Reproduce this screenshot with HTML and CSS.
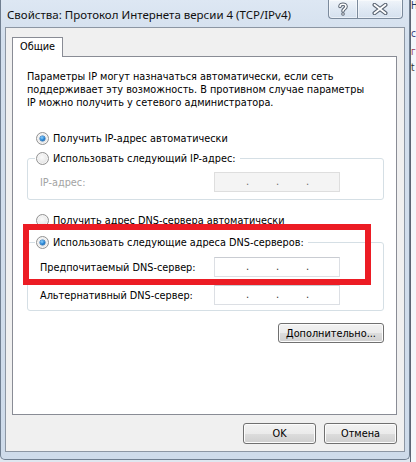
FILE: index.html
```html
<!DOCTYPE html>
<html lang="ru">
<head>
<meta charset="utf-8">
<title>Свойства: Протокол Интернета версии 4 (TCP/IPv4)</title>
<link rel="stylesheet" href="styles.css">
</head>
<body>
<div class="screen">
  <div class="window">
    <div class="titlebar">
      <span class="title">Свойства: Протокол Интернета версии 4 (TCP/IPv4)</span>
      <div class="caption">
        <div class="cbtn help">
          <svg width="12" height="14" viewBox="0 0 12 14">
            <path d="M3 4.5 C3 1.5 9 1.5 9 4.5 C9 6.8 6 6.8 6 9" fill="none" stroke="#5b6573" stroke-width="3.6" stroke-linecap="round"/>
            <circle cx="6" cy="12" r="1.8" fill="#5b6573"/>
            <path d="M3 4.5 C3 1.5 9 1.5 9 4.5 C9 6.8 6 6.8 6 9" fill="none" stroke="#fff" stroke-width="1.6" stroke-linecap="round"/>
            <circle cx="6" cy="12" r="0.8" fill="#fff"/>
          </svg>
        </div>
        <div class="cbtn close">
          <svg width="16" height="12" viewBox="0 0 16 12">
            <path d="M2.5 1.8 L13.5 10.2 M13.5 1.8 L2.5 10.2" stroke="#5b6573" stroke-width="4" stroke-linecap="round"/>
            <path d="M2.5 1.8 L13.5 10.2 M13.5 1.8 L2.5 10.2" stroke="#fff" stroke-width="1.8" stroke-linecap="round"/>
          </svg>
        </div>
      </div>
    </div>
    <div class="client">
      <div class="tabs"><div class="tab">Общие</div></div>
      <div class="panel">
        <p class="intro">Параметры IP могут назначаться автоматически, если сеть<br>поддерживает эту возможность. В противном случае параметры<br>IP можно получить у сетевого администратора.</p>
        <div class="opt first"><span class="radio checked"></span><span>Получить IP-адрес автоматически</span></div>
        <fieldset class="group g1">
          <legend><span class="legend-inner"><span class="radio"></span><span>Использовать следующий IP-адрес:</span></span></legend>
          <div class="field disabled">
            <span class="label">IP-адрес:</span>
            <div class="ipbox off"><span class="seg"></span><span class="dot">.</span><span class="seg"></span><span class="dot">.</span><span class="seg"></span><span class="dot">.</span><span class="seg"></span></div>
          </div>
        </fieldset>
        <div class="opt dnsauto"><span class="radio"></span><span>Получить адрес DNS-сервера автоматически</span></div>
        <fieldset class="group g2">
          <legend><span class="legend-inner"><span class="radio checked"></span><span>Использовать следующие адреса DNS-серверов:</span></span></legend>
          <div class="field f1">
            <span class="label">Предпочитаемый DNS-сервер:</span>
            <div class="ipbox"><span class="seg"></span><span class="dot">.</span><span class="seg"></span><span class="dot">.</span><span class="seg"></span><span class="dot">.</span><span class="seg"></span></div>
          </div>
          <div class="field f2">
            <span class="label">Альтернативный DNS-сервер:</span>
            <div class="ipbox"><span class="seg"></span><span class="dot">.</span><span class="seg"></span><span class="dot">.</span><span class="seg"></span><span class="dot">.</span><span class="seg"></span></div>
          </div>
        </fieldset>
        <div class="adv"><button class="btn wide">Дополнительно...</button></div>
      </div>
      <div class="footer">
        <button class="btn">OK</button>
        <button class="btn">Отмена</button>
      </div>
      <div class="highlight"></div>
    </div>
  </div>
  <div class="behind">
    <span class="b1">Н</span>
    <span class="b2">с</span>
    <span class="b3">г</span>
    <span class="b4">t</span>
  </div>
</div>
</body>
</html>
```
FILE: styles.css
```css
* { box-sizing: border-box; }
html, body { margin: 0; padding: 0; }
body {
  width: 416px;
  height: 462px;
  overflow: hidden;
  background: #dfe7f0;
  font-family: "DejaVu Sans Condensed", "DejaVu Sans", sans-serif;
  font-stretch: condensed;
  font-size: 10.8px;
  color: #000;
}
.screen { display: flex; height: 462px; }

.window {
  width: 410px;
  height: 460px;
  flex: none;
  display: flex;
  flex-direction: column;
  padding: 0 4px 7px 4px;
  background: linear-gradient(#dde7f3, #d3dfed 40px, #cedbea);
  border: 1px solid #707f91;
  border-top: none;
  border-radius: 0 0 5px 5px;
}

.titlebar { height: 27px; display: flex; align-items: flex-start; flex: none; }
.title {
  padding: 8px 0 0 2px;
  line-height: 13px;
  font-family: "Noto Sans", "Open Sans", sans-serif;
  font-stretch: normal;
  font-size: 11.5px;
  color: #101010;
  white-space: nowrap;
}
.caption { margin-left: auto; margin-right: 2px; display: flex; }
.cbtn {
  height: 19px;
  border: 1px solid #7b8a9c;
  border-top: none;
  background: linear-gradient(rgba(255,255,255,.55), rgba(235,241,248,.35) 50%, rgba(205,218,233,.35));
  display: flex;
  align-items: center;
  justify-content: center;
  box-shadow: inset 0 0 0 1px rgba(255,255,255,.5);
}
.help { width: 29px; border-radius: 0 0 0 4px; border-right: none; }
.close { width: 46px; border-radius: 0 0 4px 0; }

.client {
  flex: 1;
  position: relative;
  display: flex;
  flex-direction: column;
  background: #f0f0f0;
  border: 1px solid #8c96a3;
  padding: 9px 7px 0 6px;
}
.tabs { display: flex; flex: none; }
.tab {
  position: relative;
  z-index: 1;
  width: 51px;
  height: 20px;
  margin-bottom: -1px;
  padding: 1px 0 0 7px;
  line-height: 16px;
  background: #fff;
  border: 1px solid #898c95;
  border-bottom: none;
}
.panel {
  height: 359px;
  flex: none;
  background: #fff;
  border: 1px solid #898c95;
  display: flex;
  flex-direction: column;
}
.intro { margin: 13px 0 0 14px; line-height: 13px; white-space: nowrap; }

.opt { display: flex; align-items: center; gap: 4px; height: 16px; margin-left: 23px; }
.opt.first { margin-top: 21px; }
.opt.dnsauto { margin-top: 12px; }

.radio {
  flex: none;
  position: relative;
  width: 13px;
  height: 13px;
  border-radius: 50%;
  border: 1px solid #929292;
  background: radial-gradient(circle at 45% 40%, #fbfbfb, #e9e9e9 55%, #d2d2d2);
  box-shadow: inset 0 0 0 1px #f6f6f6;
}
.radio.checked::after {
  content: "";
  position: absolute;
  left: 3px;
  top: 3px;
  width: 5px;
  height: 5px;
  border-radius: 50%;
  background: radial-gradient(circle at 40% 35%, #8fd3ff, #1f7fd2 55%, #0b4a8a);
  box-shadow: 0 0 0 0.5px #2a6fb0;
}

.group {
  margin: 4px 12px 0 14px;
  padding: 0 12px 7px 12px;
  border: 1px solid #d5dfe5;
  border-radius: 3px;
  min-width: 0;
}
.group.g2 { margin-top: 6px; padding-bottom: 5px; }
.group legend { padding: 0 4px 0 1px; margin-left: -5px; }
.legend-inner { display: flex; align-items: center; gap: 4px; height: 16px; }

.field { display: flex; align-items: center; height: 20px; margin-top: 6px; }
.g2 .f1 { margin-top: 7px; }
.g2 .f2 { margin-top: 8px; }
.label { width: 174px; flex: none; }
.field.disabled .label { color: #a3a3a3; }

.ipbox {
  width: 126px;
  height: 20px;
  display: flex;
  align-items: flex-end;
  padding: 0 0 3px 4px;
  background: #fff;
  border: 1px solid #dcdfe4;
  border-top-color: #c9ccd2;
  font-size: 11px;
  line-height: 12px;
}
.ipbox.off { background: #f4f4f4; border-color: #dedede; }
.seg { width: 27px; flex: none; }
.dot { width: 3px; flex: none; text-align: center; color: #333; }
.ipbox.off .dot { color: #6d6d6d; }

.adv { display: flex; justify-content: flex-end; margin: 12px 12px 0 0; }

.btn {
  font: inherit;
  color: #000;
  height: 21px;
  width: 73px;
  padding: 0;
  border: 1px solid #707070;
  border-radius: 3px;
  background: linear-gradient(#f2f2f2, #ebebeb 50%, #dddddd 50%, #cfcfcf);
  box-shadow: inset 0 0 0 1px #fcfcfc;
}
.btn.wide { width: 106px; height: 20px; }

.footer { display: flex; justify-content: flex-end; gap: 8px; margin-top: 8px; }

.highlight {
  position: absolute;
  left: 17px;
  top: 196px;
  width: 348px;
  height: 61px;
  border: 6px solid #ec1c24;
}

.behind {
  flex: 1;
  position: relative;
  overflow: hidden;
  background: #f4f7fb;
  border-left: 1px solid #5c6674;
}
.behind span { position: absolute; left: 0; font-size: 10px; line-height: 12px; }
.b1 { top: 0; color: #1e3a5f; }
.b2 { top: 28px; color: #3b3b7a; }
.b3 { top: 46px; color: #9a3a5a; }
.b4 { top: 62px; color: #333; }
```
